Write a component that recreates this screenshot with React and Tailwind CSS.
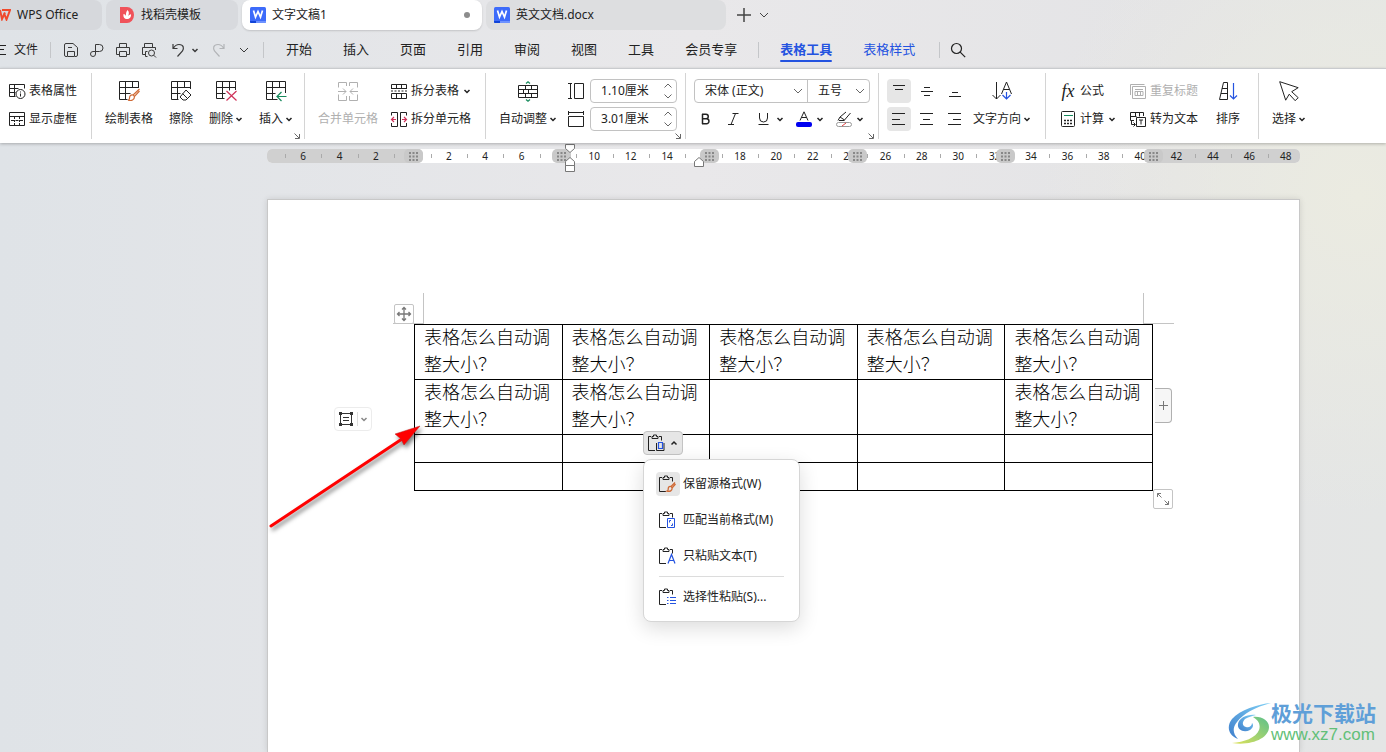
import React, { useState } from "react";

const menuTabs = ["开始", "插入", "页面", "引用", "审阅", "视图", "工具", "会员专享"];

const rulerMarks = Array.from({ length: 28 }, (_, i) => i * 2 - 6);
// these numbers sit right under a column marker
const hiddenMarks = [0, 8, 16];

const cellText = "表格怎么自动调整大小？";
const tableRows = [
  [cellText, cellText, cellText, cellText, cellText],
  [cellText, cellText, "", "", cellText],
  ["", "", "", "", ""],
  ["", "", "", "", ""],
];

function Icon({ w = 16, h = 16, children, className = "" }) {
  return (
    <svg
      width={w}
      height={h}
      viewBox={`0 0 ${w} ${h}`}
      fill="none"
      stroke="currentColor"
      className={`shrink-0 overflow-visible ${className}`}
      aria-hidden="true"
    >
      {children}
    </svg>
  );
}

function Caret({ up = false }) {
  return (
    <Icon w={8} h={8}>
      <path d={up ? "M1.5 5.5 4 3l2.5 2.5" : "M1.5 3 4 5.5 6.5 3"} strokeWidth="1.5" />
    </Icon>
  );
}

function WideCaret() {
  return (
    <Icon w={10} h={8}>
      <path d="M1 2l4 4 4-4" />
    </Icon>
  );
}

function Launcher() {
  return (
    <button aria-label="更多设置" className="absolute right-1 bottom-0 text-[#666]">
      <Icon w={6} h={6} className="block">
        <path d="M.5.5l4.5 4.5M5.5 1v4.5H1" />
      </Icon>
    </button>
  );
}

function BigButton({ icon, label, caret, disabled }) {
  return (
    <button
      disabled={disabled}
      className="flex flex-col items-center shrink-0 text-[12px] disabled:text-[#b0b0b0]"
    >
      <span className="h-7 flex items-center">{icon}</span>
      <span className="h-7 flex items-center gap-0.5 whitespace-nowrap">
        {label}
        {caret && <Caret />}
      </span>
    </button>
  );
}

function SmallButton({ icon, label, caret, disabled }) {
  return (
    <button
      disabled={disabled}
      className="h-7 flex items-center gap-1 text-[12px] whitespace-nowrap disabled:text-[#b0b0b0]"
    >
      {icon}
      {label}
      {caret && <Caret />}
    </button>
  );
}

function Group({ className = "", children }) {
  return (
    <div className={`relative flex items-start shrink-0 pt-1 border-r border-[#d4d4d4] ${className}`}>
      {children}
    </div>
  );
}

function SizeField({ id, label, icon, value }) {
  return (
    <div className="h-7 flex items-center gap-1.5">
      <label htmlFor={id} title={label}>
        {icon}
      </label>
      <div className="w-[87px] h-6 flex items-center rounded-[4px] border border-[#c2c2c2] pl-2.5 pr-1">
        <input id={id} defaultValue={value} className="w-full min-w-0 text-[12px] outline-none" />
        <span className="flex flex-col gap-0.5 text-[#666]">
          <button aria-label="增加">
            <Icon w={8} h={8} className="block">
              <path d="M.5 5.5 4 2l3.5 3.5" />
            </Icon>
          </button>
          <button aria-label="减少">
            <Icon w={8} h={8} className="block">
              <path d="M.5 2.5 4 6l3.5-3.5" />
            </Icon>
          </button>
        </span>
      </div>
    </div>
  );
}

function WordLogo() {
  return (
    <svg width="16" height="16" viewBox="0 0 16 16" className="shrink-0" aria-hidden="true">
      <rect width="16" height="16" rx="1.5" fill="#3d6bfa" />
      <path d="M0 14h6v2H1.5A1.5 1.5 0 0 1 0 14z" fill="#1144d8" />
      <path d="M6 14h10a1.5 1.5 0 0 1-1.5 2H6z" fill="#6d92ff" />
      <path d="M3.5 3.5 5.5 10 8 4.5l2.5 5.500 2-6.500" fill="none" stroke="#fff" strokeWidth="1.7" />
    </svg>
  );
}

function Clipboard() {
  return <path d="M3 2.5H.5v14H7M11 2.5h2.500V6.500M4 4.500v-2h1.500V1h3v1.500H10v2z" />;
}

const icons = {
  tableProps: (
    <Icon>
      <path d="M6.5 13.5h-6v-12h15v4M.5 5.5h9M.5 9.5h6M5.5 1.5v12" />
      <circle cx="11.5" cy="11" r="4.5" />
      <path d="M11.5 10.5v3M11.5 8.500v1" />
    </Icon>
  ),
  showGrid: (
    <Icon>
      <path d="M.5 1.5h15v13H.5zM.5 5.500h15" />
      <path d="M5.5 6v8M10.5 6v8" strokeDasharray="2 1" />
      <path d="M2 9.5h12" strokeDasharray="3 1.5" />
    </Icon>
  ),
  draw: (
    <Icon w={20} h={20}>
      <path d="M19.5 7V.5H.5v18h8M.5 6.5h19M.5 12.500h11M6.5.5v18M13.500.5v6" />
      <path
        d="M20.500 8l-6.500 6 1.500 1.500 5-5.500M14 14c-3-.5-3.500 2-3.500 3.200s-.5 1.800-1.500 2c3.500.8 6.500 0 6.500-3.700"
        stroke="#cf6a36"
        strokeWidth="1.2"
      />
    </Icon>
  ),
  erase: (
    <Icon w={20} h={20}>
      <path d="M19.5 8V.5H.5v18h7M.5 6.5h19M.5 12.5h9M6.5.5v18M13.5.5v6" />
      <path d="M15 9l5 5-5 5h-3l-3-3zM11.500 12.500l5 5" />
    </Icon>
  ),
  remove: (
    <Icon w={20} h={20}>
      <path d="M19.5 9V.5H.5v17h8M.5 6.5h19M.5 12.5h9M6.5.5v17M13.5.5v9" />
      <path d="M10.5 10l10 9.5M20.5 10l-10 9.5" stroke="#cf3058" strokeWidth="1.2" />
    </Icon>
  ),
  insert: (
    <Icon w={20} h={20}>
      <path d="M19.5 12V.5H.5v18h11M.5 6.5h19M.5 12.5h9M6.5.5v18M13.5.5v6" />
      <path d="M20.5 15.5h-9M15.500 11 11 15.500l4.500 4.500" stroke="#168a5c" strokeWidth="1.2" />
    </Icon>
  ),
  merge: (
    <Icon w={20} h={20}>
      <path d="M8.5 5V1.5h-8v5M.5 13.500v6h8V15M11.5 5V1.5h8v5M19.5 13.500v6h-8V15M0 10.500h8M5 7.500l3 3-3 3M20 10.500h-8M15 7.500l-3 3 3 3" />
    </Icon>
  ),
  splitTable: (
    <Icon>
      <path d="M.5 6V1.5h15V6M5.5 1.5V6M10.5 1.5V6M.5 5.500h15M.5 10.500h15v5H.5zM5.500 10.500v5M10.500 10.500v5" />
      <path d="M0 8h16" strokeDasharray="2 1.5" />
    </Icon>
  ),
  splitCell: (
    <Icon>
      <path d="M.5 4.500V1.5h6v14h-6V12M15.5 4.500V1.5h-6v14h6V12" />
      <path d="M5 8.500H.5M3 6 .5 8.500 3 11M11 8.500h4.500M13 6l2.500 2.500L13 11" stroke="#cf3058" strokeWidth="1.2" />
    </Icon>
  ),
  autoFit: (
    <Icon w={20} h={20}>
      <path d="M.5 4.5h19v12H.5zM.5 8.5h19M.5 12.5h19M7.5 4.5v4M13.5 4.5v4M10.5 8.5v4M5.5 8.5v4M7.5 12.5v4M13.5 12.5v4" />
      <path d="M8 2.500 10 .8l2 1.700M8 18.500l2 1.700 2-1.700" stroke="#168a5c" strokeWidth="1.2" />
    </Icon>
  ),
  rowHeight: (
    <Icon>
      <path d="M0 .5h4M0 15.5h4M2.500.5v15M6.5.5h9v15h-9z" />
    </Icon>
  ),
  colWidth: (
    <Icon>
      <path d="M.5 0v4M15.5 0v4M.5 1.500h15M.5 5.500h15v10H.5z" />
    </Icon>
  ),
  direction: (
    <Icon w={20} h={20}>
      <path d="M4.5 1v17M.5 14l4 4 4-4M9.5 13l5-12 5 12M11.5 8.5h6" />
      <path d="M14.5 11v7M10.5 14l4 4 4-4" stroke="#2453e0" strokeWidth="1.2" />
    </Icon>
  ),
  calc: (
    <Icon>
      <rect x="1.5" y=".5" width="13" height="15" rx="1" />
      <path d="M4 4.500h9" stroke="#168a5c" />
      <path d="M4 9.5h2M7 9.5h2M10 9.5h2M4 12.5h2M7 12.5h2M10 12.5h2" strokeWidth="1.5" />
    </Icon>
  ),
  repeat: (
    <Icon>
      <path d="M.5 12V1.5h14M2.5 3.5h13v12h-13zM5 6.5h8M5 8.5h8v4H5zM7.5 8.5v4M10.5 8.5v4" />
    </Icon>
  ),
  toText: (
    <Icon>
      <path d="M4 9.5H.5v-8h13V5M.5 5.5h6M5.5 1.5v4M9.5 1.5v4M1.5 9.5v4H5M3.500 11.500l2 2-2 2M6.5 6.5h9v9h-9zM9 9h4M11 9v4.5" />
    </Icon>
  ),
  sort: (
    <Icon w={20} h={20}>
      <path d="M5.500 1.500h4v17h-8zM4 7.5h5.500M3 12.5h6.500" />
      <path d="M15.5 2v16M12 14.500l3.500 3.500 3.500-3.500" stroke="#2453e0" strokeWidth="1.2" />
    </Icon>
  ),
  pointer: (
    <Icon w={20} h={20}>
      <path d="M.7.7l18.500 6-6.500 4 6.500 6-3 3-6-6.500-3.500 6z" />
    </Icon>
  ),
};

const pasteOptions = [
  {
    label: "保留源格式(W)",
    active: true,
    art: (
      <path
        d="M16 7.500l-4 4 1.200 1.200L16.500 9M12 11.500c-2.500-.5-2.800 1.500-2.800 2.700S8.500 16 8 16.200c3 .8 5.200-.5 5.200-3.500"
        stroke="#cf6a36"
        strokeWidth="1.3"
      />
    ),
  },
  {
    label: "匹配当前格式(M)",
    art: <path d="M8.5 7.5h7v9h-7zM10.5 11.500v-2h1.500M13.500 12.500v2H12" stroke="#2453e0" />,
  },
  {
    label: "只粘贴文本(T)",
    art: <path d="M9 16.5l3.500-9 3.500 9M10.200 13.5h4.600" stroke="#2453e0" strokeWidth="1.2" />,
  },
];

function TitleTabs() {
  return (
    <div className="h-[31px] flex items-start gap-1 text-[12px]">
      <button className="w-[102px] h-[30px] flex items-center gap-1.5 rounded-r-lg bg-[#d6d8dc]">
        <svg width="11" height="12" viewBox="0 0 11 12" aria-hidden="true">
          <path d="M0 1l2 9 3-6.500M2 1h8L6.500 10.500 4 4" fill="none" stroke="#f04a2c" strokeWidth="2" />
        </svg>
        WPS Office
      </button>
      <button className="w-[132px] h-[30px] flex items-center gap-[7px] px-3.5 rounded-lg bg-[#d8dade]">
        <svg width="14" height="16" viewBox="0 0 14 16" aria-hidden="true">
          <path d="M0 0h7a7 8 0 0 1 0 16H0z" fill="#f0525a" />
          <path d="M7.500 3c2 2 1.500 4 .5 6 1-1 2.500-1.500 3-2 .5 3-1.500 5-4 5S3 10.500 3.500 7c1 .2 2 .8 2.500 2C5.800 7 6 5 7.500 3z" fill="#fff" />
        </svg>
        找稻壳模板
      </button>
      <button className="w-[240px] h-[30px] flex items-center gap-1.5 px-2 rounded-lg bg-white shadow-[0_1px_2px_rgba(0,0,0,0.15)]">
        <WordLogo />
        文字文稿1
        <span className="ml-auto mr-1 size-1.5 rounded-full bg-[#8c8c8c]" />
      </button>
      <button className="w-[240px] h-[30px] flex items-center gap-1.5 px-2 rounded-lg bg-[#dddee0]">
        <WordLogo />
        英文文档.docx
      </button>
      <div className="h-[30px] flex items-center gap-2 pl-[7px] text-[#444]">
        <button aria-label="新建">
          <Icon w={14} h={14}>
            <path d="M7 0v14M0 7h14" strokeWidth="1.5" />
          </Icon>
        </button>
        <button aria-label="标签列表">
          <WideCaret />
        </button>
      </div>
    </div>
  );
}

function Divider({ className }) {
  return <span className={`w-px h-4 bg-[#c4c6c9] ${className}`} />;
}

function MenuBar() {
  return (
    <div className="h-[37px] flex items-center text-[13px]">
      <button className="flex items-center gap-2 text-[12px]">
        <Icon w={6} h={12}>
          <path d="M0 1.5h6M0 5.500h4M0 10.5h6" />
        </Icon>
        文件
      </button>
      <Divider className="ml-3" />
      <div className="flex items-center gap-2.5 ml-3 text-[#3a3a3a]">
        <button aria-label="保存">
          <Icon>
            <path d="M4 14.5H3A1.5 1.5 0 0 1 1.500 13V3A1.5 1.5 0 0 1 3 1.500h7l4.500 4V13a1.5 1.5 0 0 1-1.500 1.500h-1M4.500 14.500v-5h7v5zM5 5.500h4" />
          </Icon>
        </button>
        <button aria-label="输出为PDF">
          <Icon>
            <path d="M6.500 10V2.500h4a3.500 3.500 0 0 1 0 7H4a2.500 2.500 0 1 0 2.500 2.500v-2" />
          </Icon>
        </button>
        <button aria-label="打印">
          <Icon>
            <path d="M4.500 5V1.500h7V5M4 12.500H1.500V5.500h13v7H12M4.500 9.500h7v5h-7z" />
          </Icon>
        </button>
        <button aria-label="打印预览">
          <Icon>
            <path d="M3.500 5V1.500h8V5M4 12.500H1.500V5.500h13V8M6.500 14.500h-2v-5h2" />
            <circle cx="10.500" cy="11" r="3" />
            <path d="M12.700 13.200l2.300 2.300" />
          </Icon>
        </button>
        <button aria-label="撤销" className="flex items-center gap-1 ml-1">
          <Icon>
            <path d="M2 2v4.500h4.500M2.500 6C4 3.500 6 2.500 8 2.500c5 0 5 4 3.500 6.500L6.500 14.500" strokeWidth="1.2" />
          </Icon>
          <Caret />
        </button>
        <button aria-label="恢复" className="text-[#b2b4b7] ml-0.5">
          <Icon>
            <path d="M13 2v4.500H8.500M12.500 6C11 3.500 9 2.500 7 2.500c-5 0-5 4-3.500 6.500l5 5.500" strokeWidth="1.2" />
          </Icon>
        </button>
        <button aria-label="自定义" className="ml-0.5">
          <WideCaret />
        </button>
      </div>
      <Divider className="ml-3.5 mr-[22px]" />
      <nav className="flex items-center whitespace-nowrap">
        <div className="flex gap-[31px]">
          {menuTabs.map((tab) => (
            <button key={tab}>{tab}</button>
          ))}
        </div>
        <Divider className="mx-[21px]" />
        <div className="flex gap-[31px] text-[#2453e0]">
          <button className="relative font-bold">
            表格工具
            <span className="absolute inset-x-0 -bottom-[3px] h-0.5 rounded bg-[#2453e0]" />
          </button>
          <button>表格样式</button>
        </div>
        <Divider className="ml-6 mr-2.5" />
        <button aria-label="搜索">
          <Icon>
            <circle cx="6.500" cy="6.500" r="5" strokeWidth="1.2" />
            <path d="M10.200 10.200l5 5" strokeWidth="1.2" />
          </Icon>
        </button>
      </nav>
    </div>
  );
}

function AlignButton({ d, label, active }) {
  return (
    <button
      aria-label={label}
      className={`size-6 flex items-center justify-center rounded-[4px] ${active ? "bg-[#e6e6e6]" : ""}`}
    >
      <Icon>
        <path d={d} />
      </Icon>
    </button>
  );
}

function Ribbon() {
  return (
    <div className="relative z-10 h-[75px] flex py-1 bg-white border-t border-[#c9cbce] shadow-[0_1px_3px_rgba(0,0,0,0.25)]">
      <Group className="w-[92px] pl-[9px]">
        <div>
          <SmallButton icon={icons.tableProps} label="表格属性" />
          <SmallButton icon={icons.showGrid} label="显示虚框" />
        </div>
      </Group>
      <Group className="w-[213px] pl-[13px] gap-4">
        <BigButton icon={icons.draw} label="绘制表格" />
        <BigButton icon={icons.erase} label="擦除" />
        <BigButton icon={icons.remove} label="删除" caret />
        <BigButton icon={icons.insert} label="插入" caret />
        <Launcher />
      </Group>
      <Group className="w-[181px] pl-[13px] gap-[13px]">
        <BigButton icon={icons.merge} label="合并单元格" disabled />
        <div>
          <SmallButton icon={icons.splitTable} label="拆分表格" caret />
          <SmallButton icon={icons.splitCell} label="拆分单元格" />
        </div>
      </Group>
      <Group className="w-[200px] pl-[13px] gap-[11px]">
        <BigButton icon={icons.autoFit} label="自动调整" caret />
        <div>
          <SizeField id="row-height" label="表格行高" icon={icons.rowHeight} value="1.10厘米" />
          <SizeField id="col-width" label="表格列宽" icon={icons.colWidth} value="3.01厘米" />
        </div>
        <Launcher />
      </Group>
      <Group className="w-[193px] pl-2">
        <div>
          <div className="h-7 flex items-center">
            <div className="w-[176px] h-6 flex rounded-[4px] border border-[#c2c2c2] divide-x divide-[#c2c2c2] text-[12px]">
              <label className="relative w-[113px] flex items-center">
                <select aria-label="字体" className="w-full h-full pl-2.5 appearance-none outline-none">
                  <option>宋体 (正文)</option>
                </select>
                <span className="absolute right-1 text-[#666] pointer-events-none">
                  <WideCaret />
                </span>
              </label>
              <label className="relative flex-1 flex items-center">
                <select aria-label="字号" className="w-full h-full pl-2.5 appearance-none outline-none">
                  <option>五号</option>
                </select>
                <span className="absolute right-1 text-[#666] pointer-events-none">
                  <WideCaret />
                </span>
              </label>
            </div>
          </div>
          <div className="h-7 flex items-center pl-1 gap-3">
            <button aria-label="加粗">
              <Icon>
                <path d="M4.500 3v10M4 3.300h4a2.200 2.200 0 0 1 0 4.500H4.500h4a2.400 2.400 0 0 1 0 4.900H4" strokeWidth="1.5" />
              </Icon>
            </button>
            <button aria-label="倾斜">
              <Icon>
                <path d="M6.500 2.500h6M2 13.500h6M9.500 2.500l-4.500 11" />
              </Icon>
            </button>
            <button aria-label="下划线" className="flex items-center gap-1 ml-0.5">
              <Icon>
                <path d="M3.500 2v5a4 4 0 0 0 8 0V2M2.500 13.500h10" />
              </Icon>
              <Caret />
            </button>
            <button aria-label="字体颜色" className="flex items-center gap-1">
              <Icon>
                <path d="M4 9.500 8 .8l4 8.700M5.500 6.500h5" />
                <rect x="0" y="11" width="16" height="5" rx="2" fill="#0000f0" stroke="none" />
              </Icon>
              <Caret />
            </button>
            <button aria-label="突出显示" className="flex items-center gap-1">
              <Icon>
                <path d="M2 9.500l2-3.500 6-5M4 6l4.500 3 6-7M3 9.500h5.500" />
                <rect x=".5" y="11.500" width="15" height="4" rx="2" stroke="#999" />
                <path d="M6 15l4-3" stroke="#e04040" />
              </Icon>
              <Caret />
            </button>
          </div>
        </div>
        <Launcher />
      </Group>
      <Group className="w-[167px] pl-2 gap-1.5">
        <div className="grid grid-cols-3 gap-1 pt-0.5">
          <AlignButton label="顶端对齐" active d="M2 2.5h12M4 6.5h8" />
          <AlignButton label="垂直居中" d="M5 4.5h6M2 8.5h12M5 12.5h6" />
          <AlignButton label="底端对齐" d="M5 9.5h6M2 13.5h12" />
          <AlignButton label="左对齐" active d="M1 2.5h13M1 8.5h8M1 13.5h13" />
          <AlignButton label="水平居中" d="M1 2.5h13M4 8.5h7M1 13.5h13" />
          <AlignButton label="右对齐" d="M1 2.5h13M6 8.5h8M1 13.5h13" />
        </div>
        <BigButton icon={icons.direction} label="文字方向" caret />
      </Group>
      <Group className="w-[213px] pl-3.5 gap-3.5">
        <div>
          <SmallButton
            icon={<span className="w-4 font-['Liberation_Serif',serif] italic text-[18px]">fx</span>}
            label="公式"
          />
          <SmallButton icon={icons.calc} label="计算" caret />
        </div>
        <div>
          <SmallButton icon={icons.repeat} label="重复标题" disabled />
          <SmallButton icon={icons.toText} label="转为文本" />
        </div>
        <div className="pl-1">
          <BigButton icon={icons.sort} label="排序" />
        </div>
      </Group>
      <div className="flex items-start pt-1 pl-[13px]">
        <BigButton icon={icons.pointer} label="选择" caret />
      </div>
    </div>
  );
}

function Ruler() {
  return (
    <div className="relative h-3.5 mt-1.5 bg-white rounded-[5px] text-[10px] leading-[14px] text-[#222]">
      <div className="absolute inset-0 flex justify-between">
        <span className="w-[156px] rounded-[5px] bg-[#d0d0d0]" />
        <span className="w-[156px] rounded-[5px] bg-[#d0d0d0]" />
      </div>
      <div className="relative overflow-hidden">
        <div className="flex pl-[18px] -mr-1">
          {rulerMarks.map((n) => (
            <span key={n} className="relative flex-1 h-3.5 text-center">
              <span className="absolute left-0 top-[5px] w-px h-1 bg-[#aaa]" />
              {hiddenMarks.includes(n) ? "" : Math.abs(n)}
            </span>
          ))}
        </div>
      </div>
      <div className="absolute inset-y-0 left-[137px] right-[137px] flex justify-between">
        {[0, 1, 2, 3, 4, 5].map((n) => (
          <span key={n} className="w-[19px] flex items-center justify-center rounded-[5px] bg-[#c9c9c9] text-[#888]">
            <Icon w={9} h={9}>
              <path d="M0 1h9M0 4.5h9M0 8h9" strokeWidth="2" strokeDasharray="2 1.5" />
            </Icon>
          </span>
        ))}
      </div>
      {/* indent handles */}
      <svg
        width="12"
        height="32"
        viewBox="0 0 12 32"
        fill="#fff"
        stroke="#777"
        className="absolute left-[297px] -top-[6px]"
        aria-hidden="true"
      >
        <path d="M1.5 1.5h9v4L6 9.500l-4.500-4zM6 14.500l4.500 4v4h-9v-4zM1.5 22.5h9v6h-9z" />
      </svg>
      <svg
        width="12"
        height="12"
        viewBox="0 0 12 12"
        fill="#fff"
        stroke="#777"
        className="absolute left-[426px] top-[7px]"
        aria-hidden="true"
      >
        <path d="M6 1.5l4.500 4v5h-9v-5z" />
      </svg>
    </div>
  );
}

function PasteMenu() {
  return (
    <div className="absolute left-[229px] top-[135px] w-[157px] px-3 py-1.5 rounded-lg bg-white border border-[#d6d6d6] shadow-[0_6px_20px_rgba(0,0,0,0.14)] text-[12px]">
      {pasteOptions.map((item) => (
        <button key={item.label} className="h-9 flex items-center gap-[3px] whitespace-nowrap">
          <span
            className={`size-6 flex items-center justify-center rounded-[4px] ${item.active ? "bg-[#e6e6e6]" : ""}`}
          >
            <Icon w={18} h={18}>
              <Clipboard />
              {item.art}
            </Icon>
          </span>
          {item.label}
        </button>
      ))}
      <hr className="mx-[3px] my-0.5 border-[#dcdcdc]" />
      <button className="h-9 flex items-center gap-[3px] whitespace-nowrap">
        <span className="size-6 flex items-center justify-center">
          <Icon w={18} h={18}>
            <Clipboard />
            <path d="M8 9.500h1.500M11 9.500h6M8 12.500h1.500M11 12.500h6M8 15.500h1.500M11 15.500h6" stroke="#2453e0" />
          </Icon>
        </span>
        选择性粘贴(S)...
      </button>
    </div>
  );
}

function Arrow() {
  return (
    <svg
      width="160"
      height="112"
      viewBox="0 0 160 112"
      className="absolute -left-[146px] top-[98px] drop-shadow-[2px_3px_2px_rgba(0,0,0,0.5)]"
      aria-hidden="true"
    >
      <path d="M3 104 134 17" stroke="#f00" strokeWidth="3" strokeLinecap="round" />
      <path d="M152 4l-25 8 6 5 3 6z" fill="#f00" stroke="#b22" strokeWidth=".5" />
    </svg>
  );
}

function DocumentTable() {
  const [menuOpen, setMenuOpen] = useState(true);

  return (
    <div className="relative">
      <table className="w-full table-fixed border-collapse text-black">
        <tbody>
          {tableRows.map((row, r) => (
            <tr key={r} className={r < 2 ? "h-[55px]" : "h-7"}>
              {row.map((text, c) => (
                <td
                  key={c}
                  className="border border-black px-[9px] align-top font-['Liberation_Serif','Noto_Sans_CJK_SC',serif] font-light text-[18px] leading-[27px]"
                >
                  {text}
                </td>
              ))}
            </tr>
          ))}
        </tbody>
      </table>

      {/* page margin corners */}
      <span className="absolute -left-[21px] -top-[31px] w-[31px] h-[31px] border-r border-b border-[#c4c4c4]" />
      <span className="absolute -right-[21px] -top-[31px] w-[31px] h-[31px] border-l border-b border-[#c4c4c4]" />

      <button
        aria-label="移动表格"
        className="absolute -left-5 -top-5 size-5 flex items-center justify-center rounded-[2px] border border-[#c4c4c4] bg-white text-[#777]"
      >
        <Icon>
          <path d="M8 2v12M2 8h12M6 3.500l2-2 2 2M6 12.500l2 2 2-2M3.500 6l-2 2 2 2M12.500 6l2 2-2 2" strokeWidth="1.3" />
        </Icon>
      </button>
      <button
        aria-label="段落布局"
        className="absolute -left-20 top-[83px] w-[38px] h-6 flex items-center justify-between px-[3px] rounded-[4px] border border-[#ececec] bg-white"
      >
        <Icon className="text-[#333]">
          <path d="M2.500 2.500h11v11h-11zM5 6.500h6M5 9.500h6" />
          <path d="M1 1h3v3H1zM12 1h3v3h-3zM1 12h3v3H1zM12 12h3v3h-3z" fill="#333" stroke="none" />
        </Icon>
        <span className="w-px h-3.5 bg-[#ddd]" />
        <span className="text-[#888]">
          <Caret />
        </span>
      </button>
      <button
        aria-label="添加列"
        className="absolute -right-[19px] top-16 w-[17px] h-[35px] flex items-center justify-center rounded-r-[4px] border border-l-0 border-[#b0b0b0] bg-[#f6f6f6] text-[#777]"
      >
        <Icon w={9} h={9}>
          <path d="M4.500 0v9M0 4.500h9" />
        </Icon>
      </button>
      <button
        aria-label="调整表格大小"
        className="absolute -right-5 top-[165px] size-5 flex items-center justify-center rounded-[2px] border border-[#c4c4c4] bg-white text-[#777]"
      >
        <Icon w={14} h={14}>
          <path d="M1.500 5V1.500H5M1.500 1.500l4 4M12.500 9v3.500H9M12.500 12.500l-4-4" />
        </Icon>
      </button>

      <button
        aria-label="粘贴选项"
        onClick={() => setMenuOpen(!menuOpen)}
        className="absolute left-[229px] top-[107px] w-10 h-6 flex items-center justify-center gap-1 rounded-[4px] border border-[#c4c4c4] bg-[#e6e6e6]"
      >
        <Icon w={18} h={18}>
          <Clipboard />
          <path d="M8.500 9v7.500h7.500V9" />
          <path d="M10.500 8.500h4v6h-4z" stroke="#2453e0" strokeWidth="1.2" />
        </Icon>
        <Caret up />
      </button>
      {menuOpen && <PasteMenu />}
      <Arrow />
    </div>
  );
}

function Watermark() {
  return (
    <div className="absolute right-2.5 bottom-[7px] flex items-center font-bold">
      <svg width="43" height="41" viewBox="0 0 43 41" aria-hidden="true">
        <defs>
          <linearGradient id="crest" x1="0" y1="1" x2="1" y2="0">
            <stop offset="0" stopColor="#3f7fcc" />
            <stop offset="1" stopColor="#7fd0f5" />
          </linearGradient>
          <linearGradient id="swirl" x1="0" y1="1" x2="1" y2="0">
            <stop offset="0" stopColor="#dfe25a" />
            <stop offset="1" stopColor="#5cc08a" />
          </linearGradient>
        </defs>
        <path d="M43 0C30 1 12 7 4 16-1 22-1 32 10 36 5 31 4 25 9 19 15 11 27 4 43 0z" fill="url(#crest)" />
        <path
          d="M28 12c-9-1-17 3-18 9-1 6 6 9 12 6 3-2 4-5 2-7 0 3-3 5-6 4-4-1-4-5-1-8 3-2 7-3 11-4z"
          fill="url(#crest)"
        />
        <path d="M25 14c9-1 16 4 16 10C41 35 24 43 4 40c12-1 24-5 27-13 2-6-1-10-6-13z" fill="url(#swirl)" />
      </svg>
      <div className="flex flex-col">
        <span className="text-[21px] leading-6 text-[#5f9fd8]">极光下载站</span>
        <span className="font-['Liberation_Sans',sans-serif] font-normal text-[17px] leading-5 text-[#62bf78]">
          www.xz7.com
        </span>
      </div>
    </div>
  );
}

export default function App() {
  return (
    <div className="relative h-screen flex flex-col overflow-hidden bg-[radial-gradient(circle_at_98%_26%,#ebebe1_0,transparent_320px),linear-gradient(to_right,#dfe3e7,#e9e8ea_50%,#e4e4e6_85%,#e4e6e5)] font-['Noto_Sans','Noto_Sans_CJK_SC',sans-serif] text-[#222]">
      <TitleTabs />
      <MenuBar />
      <Ribbon />
      <main className="flex-1 flex flex-col pl-[267px] pr-[86px]">
        <Ruler />
        <div className="flex-1 mt-9 px-[146px] pt-[124px] bg-white border border-b-0 border-[#c8c8c8] shadow-[0_0_6px_rgba(0,0,0,0.12)]">
          <DocumentTable />
        </div>
      </main>
      <Watermark />
    </div>
  );
}
